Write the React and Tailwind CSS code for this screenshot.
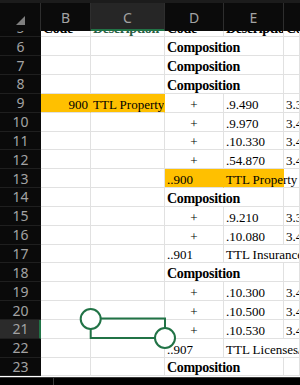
import React from 'react';

const GREEN = '#217346';

// column widths: row header, B, C, D, E, F
const W = ['w-[41px]', 'w-[50px]', 'w-[74px]', 'w-[59px]', 'w-[60px]', 'w-[16px]'];
const KEYS = ['B', 'C', 'D', 'E', 'F'];

const comp = { t: 'Composition', b: true, over: true };
const plus = { t: '+', center: true };
const val = (t) => ({ t });
const f = (t) => ({ t });

const rows = [
  { n: 5, B: { t: 'Code', b: true }, C: { t: 'Description', b: true, green: true }, D: { t: 'Code', b: true }, E: { t: 'Description', b: true }, F: { t: 'Code', b: true } },
  { n: 6, D: comp },
  { n: 7, D: comp },
  { n: 8, D: comp },
  { n: 9, B: { t: '900', right: true, fill: true }, C: { t: 'TTL Property', fill: true }, D: plus, E: val('.9.490'), F: f('3.3') },
  { n: 10, D: plus, E: val('.9.970'), F: f('3.4') },
  { n: 11, D: plus, E: val('.10.330'), F: f('3.4') },
  { n: 12, D: plus, E: val('.54.870'), F: f('3.4') },
  { n: 13, D: { t: '..900', fill: true }, E: { t: 'TTL Property', fill: true, over: true } },
  { n: 14, D: comp },
  { n: 15, D: plus, E: val('.9.210'), F: f('3.3') },
  { n: 16, D: plus, E: val('.10.080'), F: f('3.4') },
  { n: 17, D: { t: '..901' }, E: { t: 'TTL Insurance', over: true } },
  { n: 18, D: comp },
  { n: 19, D: plus, E: val('.10.300'), F: f('3.4') },
  { n: 20, D: plus, E: val('.10.500'), F: f('3.4') },
  { n: 21, D: plus, E: val('.10.530'), F: f('3.4'), sel: true },
  { n: 22, D: { t: '..907' }, E: { t: 'TTL Licenses/', over: true } },
  { n: 23, D: comp },
];

const Cell = ({ c, w }) => {
  const cls = [
    w,
    'h-full shrink-0 flex items-end border-b border-[#e1e1e1] leading-[15px] whitespace-nowrap text-[13px] font-["Liberation_Serif",serif]',
  ];
  if (!c) {
    cls.push('border-r');
    return <div className={cls.join(' ')} />;
  }
  cls.push(c.over ? 'overflow-visible' : 'overflow-hidden border-r');
  if (c.fill) cls.push('bg-[#ffc000] border-r-[#ffc000]');
  if (c.b) cls.push('font-bold text-[14px] tracking-[-0.3px]');
  if (c.right) cls.push('justify-end pr-[2px]');
  else if (c.center) cls.push('justify-center');
  else cls.push('pl-[2px]');
  cls.push(c.green ? 'text-[#2b5d45]' : 'text-black');
  return (
    <div className={cls.join(' ')}>
      <span>{c.t}</span>
    </div>
  );
};

const Row = ({ r }) => (
  <div className="flex h-[18.85px]">
    <div
      className={`${W[0]} shrink-0 h-full flex items-center justify-center border-b border-[#1f1f1f] text-[14px] text-[#a3a3a3] font-['Noto_Sans',sans-serif] ${
        r.sel ? 'bg-[#2b2b2b] border-r-2 border-r-[#217346] pl-[2px]' : 'bg-[#0a0a0a]'
      }`}
    >
      {r.n}
    </div>
    {KEYS.map((k, i) => (
      <Cell key={k} c={r[k]} w={W[i + 1]} />
    ))}
  </div>
);

export default function App() {
  return (
    <div className="relative w-[300px] h-[385px] overflow-hidden bg-black font-['Noto_Sans',sans-serif]">
      {/* top strip */}
      <div className="h-[3px] bg-[#1c1c1c]" />

      {/* column headers */}
      <div className="flex h-[28px] bg-[#0b0b0b] text-[14px] text-[#a3a3a3]">
        <div className={`${W[0]} shrink-0 relative border-r border-[#2e2e2e]`}>
          <svg className="absolute left-0 top-0" width="41" height="28" viewBox="0 0 41 28">
            <polygon points="25,13 25,22 16,22" fill="#7f7f7f" />
          </svg>
        </div>
        <div className={`${W[1]} shrink-0 flex items-center justify-center border-r border-[#2e2e2e]`}>B</div>
        <div className={`${W[2]} shrink-0 flex items-center justify-center bg-[#262626] border-b-2 border-[#217346] border-r border-r-[#2e2e2e] pt-[2px]`}>C</div>
        <div className={`${W[3]} shrink-0 flex items-center justify-center border-r border-[#2e2e2e]`}>D</div>
        <div className={`${W[4]} shrink-0 flex items-center justify-center border-r border-[#2e2e2e]`}>E</div>
        <div className={`${W[5]} shrink-0`} />
      </div>

      {/* grid body, scrolled so row 5 is partly hidden */}
      <div className="h-[346px] overflow-hidden bg-white">
        <div className="-mt-[12.55px]">
          {rows.map((r) => (
            <Row key={r.n} r={r} />
          ))}
        </div>
      </div>

      {/* bottom bar */}
      <div className="relative h-[8px] bg-black border-t border-[#3a3a3a]">
        <div className="absolute left-[53px] top-0 h-full w-px bg-[#3a3a3a]" />
      </div>

      {/* selection handles */}
      <svg className="absolute left-0 top-0 pointer-events-none" width="300" height="385" viewBox="0 0 300 385">
        <rect x="90.7" y="318.5" width="74.3" height="19.5" fill="none" stroke={GREEN} strokeWidth="2" />
        <circle cx="90.7" cy="319" r="10" fill="#fff" stroke={GREEN} strokeWidth="2" />
        <circle cx="165" cy="338" r="10" fill="#fff" stroke={GREEN} strokeWidth="2" />
      </svg>
    </div>
  );
}
